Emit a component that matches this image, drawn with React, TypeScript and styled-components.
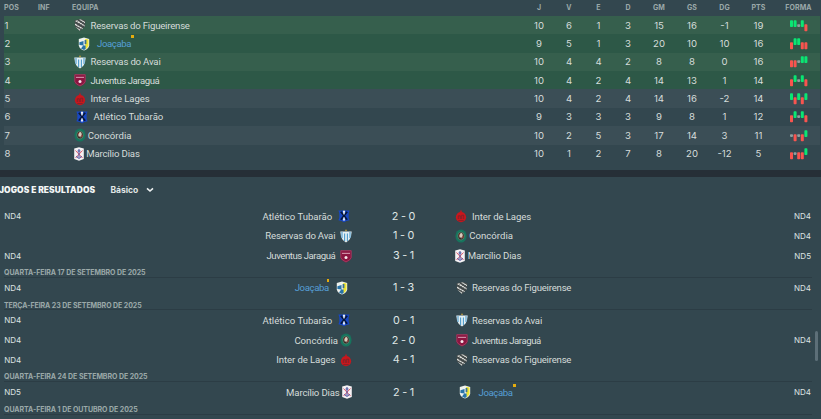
import styled, { createGlobalStyle } from "styled-components";
import { ReactNode } from "react";

const colors = {
  PANEL: '#33474f',
  STRIPE: '#3b4e56',
  GREEN: '#2d5847',
  GREEN_STRIPE: '#365f4d',
  GAP: '#262f37',
  LINE: '#2c3d45',
  TEXT: '#d5dcda',
  MUTED: '#9ba9a9',
  OWN: '#569fd6',
  MARKER: '#e5ac0e',
  WIN: '#0ae673',
  LOSS: '#f9544f',
  DRAW: '#8f9f9f',
}

const GlobalStyle = createGlobalStyle`
  * {
    box-sizing: border-box;
  }

  body {
    margin: 0;
    background: ${colors.GAP};
    color: ${colors.TEXT};
    font-family: Roboto, "Liberation Sans", sans-serif;
    font-size: 9.6px;
    overflow: hidden;
  }
`

const Page = styled.main`
  display: flex;
  flex-direction: column;
  gap: 7px;
  width: 821px;
  height: 419px;
  overflow: hidden;
`

const StandingsPanel = styled.section`
  flex: none;
  height: 170px;
  padding: 0 1px 0 4px;
  background: ${colors.PANEL};
`

const standingsColumns = '34px 34px 452px 30px 30px 29px 30px 32px 34px 31px 37px 43px';

const HeaderRow = styled.div`
  display: grid;
  grid-template-columns: ${standingsColumns};
  align-items: center;
  height: 15.6px;
  margin-bottom: .4px;
  font-family: Inter, sans-serif;
  font-size: 7px;
  font-weight: 700;
  letter-spacing: .1px;
  color: ${colors.MUTED};
`

const StandingsRow = styled.div<{ promoted: boolean, odd: boolean }>`
  display: grid;
  grid-template-columns: ${standingsColumns};
  align-items: center;
  height: 18.37px;
  background: ${props => (props.promoted
  ? (props.odd ? colors.GREEN_STRIPE : colors.GREEN)
  : (props.odd ? colors.STRIPE : colors.PANEL))};
`

const Cell = styled.span<{ center?: boolean }>`
  text-align: ${props => (props.center ? 'center' : 'left')};
`

const Num = styled.span`
  font-family: Inter, sans-serif;
  font-size: 9.6px;
  text-align: center;
`

const Position = styled(Num)`
  text-align: left;
  padding-left: .6px;
`

const FormSvg = styled.svg`
  display: block;
  margin: 1px 0 0 13px;
`

const TeamBox = styled.div<{ home?: boolean }>`
  display: flex;
  flex-direction: ${props => (props.home ? 'row-reverse' : 'row')};
  align-items: center;
  padding: ${props => (props.home ? '0 .7px 0 0' : '0 0 0 1.5px')};
`

const CrestSlot = styled.span<{ inset: number, span: number, home?: boolean }>`
  display: flex;
  flex: none;
  flex-direction: ${props => (props.home ? 'row-reverse' : 'row')};
  width: ${props => props.span}px;
  padding-${props => (props.home ? 'right' : 'left')}: ${props => props.inset}px;
`

const TeamName = styled.span<{ tracking: number, own?: boolean }>`
  position: relative;
  white-space: nowrap;
  letter-spacing: ${props => props.tracking}px;
  color: ${props => (props.own ? colors.OWN : colors.TEXT)};
`

const Marker = styled.i<{ narrow?: boolean }>`
  position: absolute;
  top: -3px;
  right: ${props => (props.narrow ? '0' : '-3px')};
  width: ${props => (props.narrow ? '2px' : '3px')};
  height: 3px;
  background: ${colors.MARKER};
`

const ResultsPanel = styled.section`
  position: relative;
  flex: 1;
  min-height: 0;
  background: ${colors.PANEL};
  overflow: hidden;
`

const ResultsHeader = styled.header`
  display: flex;
  align-items: center;
  height: 25px;
  margin-bottom: 4.2px;
  font-family: Inter, sans-serif;
`

const Title = styled.h2`
  width: 111.5px;
  margin: 0 0 0 -1px;
  font-size: 8.4px;
  font-weight: 900;
  letter-spacing: .1px;
  color: #f4f7f7;
`

const Picker = styled.button`
  display: flex;
  align-items: center;
  gap: 8px;
  padding: 0;
  border: none;
  background: none;
  font: 700 8.5px Inter, sans-serif;
  color: #e0e6e6;
`

const DateRow = styled.div`
  height: 12.6px;
  margin: 0 9px 0 4px;
  padding-top: 1.8px;
  border-bottom: 1px solid ${colors.LINE};
  font: 700 7px/11px Inter, sans-serif;
  letter-spacing: -.06px;
  color: ${colors.MUTED};
`

const FixtureRow = styled.div`
  display: grid;
  grid-template-columns: 40px 309px 100.5px 1fr 40px;
  align-items: center;
  height: 19.75px;
  margin: 0 10px 0 4px;
`

const Competition = styled.span<{ end?: boolean }>`
  font: 400 8px Inter, sans-serif;
  text-align: ${props => (props.end ? 'right' : 'left')};
  padding-left: .3px;
  color: #dce3e3;
`

const Score = styled.span`
  font-family: Inter, sans-serif;
  font-size: 10.8px;
  text-align: center;
  padding-left: .5px;
  letter-spacing: -.2px;
  color: #dfe5e5;
`

const Scrollbar = styled.div`
  position: absolute;
  top: 154px;
  right: 3px;
  width: 3px;
  height: 30px;
  border-radius: 2px;
  background: #5d6f78;
`

type TeamKey = 'figueirense' | 'joacaba' | 'avai' | 'juventus' | 'inter' | 'tubarao' | 'concordia' | 'marcilio';

type TeamInfo = {
  name: string,
  inset: number,
  span: number,
  tracking: number,
  crestWidth?: number,
  own?: boolean,
  crest: ReactNode,
}

const teams: Record<TeamKey, TeamInfo> = {
  figueirense: {
    name: 'Reservas do Figueirense', inset: .5, span: 17, tracking: -.21,
    crest: <>
      <path d="M.6 2.300 6 1l5.400 1.300-.4 6.300L6 13 1 8.600z" fill="#454b4b" />
      <path d="m1 3 2.200-.8L11 7.400l-.5 1.200zM5 1.600l2-.2 4 2.600v1.300zM1 5.400l8 4.800-1 1L1 7zM1.400 8.800l5 3-.6.9z" fill="#e2e4e0" />
      <path d="m2 5.500 3-3.500M3.500 8 8 2.500M4.800 10l5-6M6.800 11.500l3.600-4.500" stroke="#3d4344" strokeWidth=".6" />
    </>,
  },
  joacaba: {
    name: 'Joaçaba', inset: 4, span: 23.5, tracking: -.38, own: true,
    crest: <>
      <path d="M.8 2 6 .6 11.200 2v6.500Q10.500 12 6 13.600 1.500 12 .8 8.500z" fill="#eef2ee" />
      <path d="M7.200 1.800 10.500 2.600v6Q9.700 11.200 7.200 12.400z" fill="#efe52f" />
      <path d="M1.400 5.200 5.500 4v4.400L1.400 8zM5.200 8.500h2.400v3.600L6 13 3 11.600z" fill="#2873a8" />
      <path d="M6.600 3h1.800v4.200H6.600z" fill="#3c7290" />
    </>,
  },
  avai: {
    name: 'Reservas do Avai', inset: .5, span: 17, tracking: -.18,
    crest: <>
      <circle cx="6" cy="1.400" r=".8" fill="#c8a43a" />
      <path d="M.3 2.500h11.400l-.8 5.500Q9.500 12 6 13.400 2.500 12 1.100 8z" fill="#e4f0f4" />
      <path d="M2 3v6M4.600 4.500v7.500M7.400 4.500v7.500M10 3v6" stroke="#4d9bcb" strokeWidth="1.100" />
    </>,
  },
  juventus: {
    name: 'Juventus Jaraguá', inset: .7, span: 17, tracking: -.45,
    crest: <>
      <path d="M.4 1.300h11.200v7.400Q10.500 11.700 6 13.400 1.500 11.700.4 8.700z" fill="#8b1540" />
      <path d="M.8 1.700h10.400v6.800Q10.200 11.300 6 12.900 1.800 11.300.8 8.500z" fill="none" stroke="#b45c7c" strokeWidth=".5" />
      <path d="M2 3.800h8v1.200H2z" fill="#cc8aa2" />
      <circle cx="6" cy="8.400" r="1.500" fill="#f6e8eb" />
    </>,
  },
  inter: {
    name: 'Inter de Lages', inset: .3, span: 17, tracking: -.1,
    crest: <>
      <circle cx="6" cy="8.200" r="5.100" fill="#ca161c" />
      <path d="m6 .6 1 2.600H5z" fill="#ca161c" />
      <path d="M3.300 10V6.800h2V10M6.700 10V6.200h2V10M3.300 11.600h5.400" fill="none" stroke="#74252d" strokeWidth=".8" />
    </>,
  },
  tubarao: {
    name: 'Atlético Tubarão', inset: 2.7, span: 20, tracking: 0,
    crest: <>
      <path d="M.4 1.500h11.200l-.9 2.500v5l.9 2.200Q8 11.800 6 13.200 4 11.800.4 11.200L1.300 9V4z" fill="#1747c4" />
      <path d="m2.800 2.800 6.400 8M9.200 2.800l-6.400 8" stroke="#081738" strokeWidth="1.700" />
      <path d="M4.900 1.800h2.200L6.500 5.500h-1zM5.500 8.300h1l.6 3.300H4.900z" fill="#f1f4f8" />
    </>,
  },
  concordia: {
    name: 'Concórdia', inset: 0, span: 14.3, tracking: 0,
    crest: <>
      <ellipse cx="6" cy="7" rx="5.600" ry="6.600" fill="#17745d" />
      <ellipse cx="6" cy="7" rx="3.300" ry="4" fill="#3b2926" stroke="#629b83" strokeWidth=".6" />
      <path d="M5 4.500 7 4l.8 2L7 10l-.8-2L5 9l-.8-2z" fill="#d9cabb" />
      <path d="m4 5 1 1M8 7v2" stroke="#b43e32" strokeWidth=".8" />
    </>,
  },
  marcilio: {
    name: 'Marcílio Dias', inset: 0, span: 12.7, tracking: -.15, crestWidth: 10,
    crest: <>
      <path d="M1.200 1.500 6 .2l4.800 1.300V12L6 13.800 1.200 12z" fill="#f5f2f4" />
      <path d="m2.500 3.500 7 7.500M9.500 3.500l-7 7.500" stroke="#e0596a" strokeWidth="1" />
      <path d="M6 2v8.500M3.600 9Q4 11 6 11.300 8 11 8.400 9M4.500 4h3" fill="none" stroke="#414a9c" strokeWidth="1" />
    </>,
  },
}

type TeamProps = {
  id: TeamKey,
  home?: boolean,
}

const Team = ({id, home}: TeamProps) => {
  const team = teams[id];
  const width = team.crestWidth ?? 12;

  return (
    <TeamBox home={home}>
      <CrestSlot inset={team.inset} span={team.span} home={home}>
        <svg width={width} height="14" viewBox={`${(12 - width) / 2} 0 ${width} 14`}>
          {team.crest}
        </svg>
      </CrestSlot>
      <TeamName tracking={team.tracking} own={team.own}>
        {team.name}
        {team.own && <Marker narrow={home} />}
      </TeamName>
    </TeamBox>
  );
}

const formShapes: Record<string, { y: number, height: number, fill: string }> = {
  W: {y: 0.3, height: 6.7, fill: colors.WIN},
  D: {y: 4.3, height: 2.6, fill: colors.DRAW},
  L: {y: 4.3, height: 7, fill: colors.LOSS},
}

const Form = ({results}: { results: string }) => (
  <FormSvg width="18" height="12" viewBox="0 0 18 12">
    {results.split('').map((result, index) => (
      <rect key={index} x={index * 3.6} width="3" rx=".8" {...formShapes[result]} />
    ))}
  </FormSvg>
)

const standings: { team: TeamKey, stats: number[], form: string }[] = [
  {team: 'figueirense', stats: [10, 6, 1, 3, 15, 16, -1, 19], form: 'WWDWL'},
  {team: 'joacaba', stats: [9, 5, 1, 3, 20, 10, 10, 16], form: 'LWWLL'},
  {team: 'avai', stats: [10, 4, 4, 2, 8, 8, 0, 16], form: 'LLDWW'},
  {team: 'juventus', stats: [10, 4, 2, 4, 14, 13, 1, 14], form: 'LWDWL'},
  {team: 'inter', stats: [10, 4, 2, 4, 14, 16, -2, 14], form: 'WLWLW'},
  {team: 'tubarao', stats: [9, 3, 3, 3, 9, 8, 1, 12], form: 'LWDWL'},
  {team: 'concordia', stats: [10, 2, 5, 3, 17, 14, 3, 11], form: 'DLDLW'},
  {team: 'marcilio', stats: [10, 1, 2, 7, 8, 20, -12, 5], form: 'LDLLW'},
]

type Fixture = {
  left?: string,
  home: TeamKey,
  score: string,
  away: TeamKey,
  right?: string,
}

const days: { date?: string, fixtures: Fixture[] }[] = [
  {
    fixtures: [
      {left: 'ND4', home: 'tubarao', score: '2 - 0', away: 'inter', right: 'ND4'},
      {home: 'avai', score: '1 - 0', away: 'concordia', right: 'ND4'},
      {left: 'ND4', home: 'juventus', score: '3 - 1', away: 'marcilio', right: 'ND5'},
    ],
  },
  {
    date: 'QUARTA-FEIRA 17 DE SETEMBRO DE 2025',
    fixtures: [
      {left: 'ND4', home: 'joacaba', score: '1 - 3', away: 'figueirense', right: 'ND4'},
    ],
  },
  {
    date: 'TERÇA-FEIRA 23 DE SETEMBRO DE 2025',
    fixtures: [
      {left: 'ND4', home: 'tubarao', score: '0 - 1', away: 'avai'},
      {left: 'ND4', home: 'concordia', score: '2 - 0', away: 'juventus', right: 'ND4'},
      {left: 'ND4', home: 'inter', score: '4 - 1', away: 'figueirense'},
    ],
  },
  {
    date: 'QUARTA-FEIRA 24 DE SETEMBRO DE 2025',
    fixtures: [
      {left: 'ND5', home: 'marcilio', score: '2 - 1', away: 'joacaba', right: 'ND4'},
    ],
  },
  {date: 'QUARTA-FEIRA 1 DE OUTUBRO DE 2025', fixtures: []},
]

const statHeaders = ['J', 'V', 'E', 'D', 'GM', 'GS', 'DG', 'PTS', 'FORMA'];

const App = () => (
  <>
    <GlobalStyle />
    <Page>
      <StandingsPanel>
        <HeaderRow>
          <Cell>POS</Cell>
          <Cell>INF</Cell>
          <Cell>EQUIPA</Cell>
          {statHeaders.map(header => <Cell key={header} center>{header}</Cell>)}
        </HeaderRow>
        {standings.map((row, index) => (
          <StandingsRow key={row.team} promoted={index < 4} odd={index % 2 === 0}>
            <Position>{index + 1}</Position>
            <span />
            <Team id={row.team} />
            {row.stats.map((stat, i) => <Num key={i}>{stat}</Num>)}
            <Form results={row.form} />
          </StandingsRow>
        ))}
      </StandingsPanel>
      <ResultsPanel>
        <ResultsHeader>
          <Title>JOGOS E RESULTADOS</Title>
          <Picker>
            Básico
            <svg width="8" height="6" viewBox="0 0 8 6">
              <path d="m1 1.300 3 2.700 3-2.700" fill="none" stroke="#eef2f2" strokeWidth="1.600" />
            </svg>
          </Picker>
        </ResultsHeader>
        {days.map((day, index) => (
          <div key={index}>
            {day.date && <DateRow>{day.date}</DateRow>}
            {day.fixtures.map(fixture => (
              <FixtureRow key={fixture.home}>
                <Competition>{fixture.left}</Competition>
                <Team id={fixture.home} home />
                <Score>{fixture.score}</Score>
                <Team id={fixture.away} />
                <Competition end>{fixture.right}</Competition>
              </FixtureRow>
            ))}
          </div>
        ))}
        <Scrollbar />
      </ResultsPanel>
    </Page>
  </>
);

export default App;
